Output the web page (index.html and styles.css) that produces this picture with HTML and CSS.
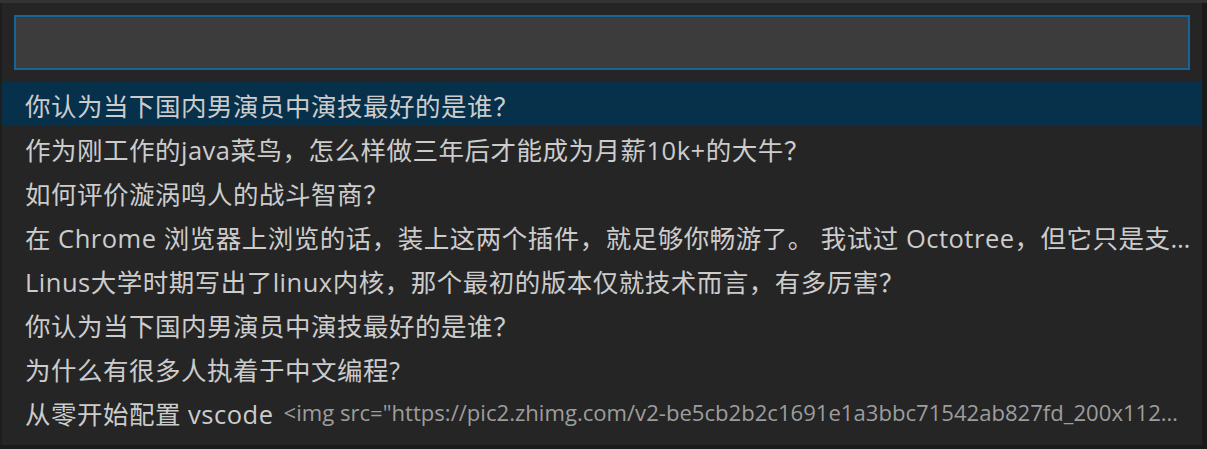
FILE: index.html
```html
<!DOCTYPE html>
<html lang="zh">
<head>
<meta charset="utf-8">
<link rel="stylesheet" href="styles.css">
</head>
<body>
<div class="topstrip"></div>
<div class="frame">
  <div class="widget">
    <div class="input-wrap"><input class="input" type="text" aria-label="input"></div>
    <ul class="list">
      <li class="row selected"><span class="label">你认为当下国内男演员中演技最好的是谁？</span></li>
      <li class="row"><span class="label">作为刚工作的java菜鸟，怎么样做三年后才能成为月薪10k+的大牛？</span></li>
      <li class="row"><span class="label">如何评价漩涡鸣人的战斗智商？</span></li>
      <li class="row"><span class="label">在 Chrome 浏览器上浏览的话，装上这两个插件，就足够你畅游了。 我试过 Octotree，但它只是支持 GitHub 的代码浏览，而 Sourcegraph 可以支持更多</span></li>
      <li class="row"><span class="label">Linus大学时期写出了linux内核，那个最初的版本仅就技术而言，有多厉害？</span></li>
      <li class="row"><span class="label">你认为当下国内男演员中演技最好的是谁？</span></li>
      <li class="row"><span class="label">为什么有很多人执着于中文编程?</span></li>
      <li class="row"><span class="label">从零开始配置 vscode</span><span class="desc">&lt;img src="https://pic2.zhimg.com/v2-be5cb2b2c1691e1a3bbc71542ab827fd_200x112.jpg" data-rawwidth="1280"&gt;</span></li>
    </ul>
  </div>
  <div class="side"></div>
</div>
</body>
</html>
```
FILE: styles.css
```css
html, body {
  margin: 0;
  padding: 0;
  background: #1a1a1a;
  width: 1207px;
  height: 449px;
  overflow: hidden;
}
.topstrip {
  height: 3px;
  background: #333333;
}
.frame {
  display: flex;
  padding-left: 2px;
  background: #1e1e1e;
}
.widget {
  width: 1200px;
  height: 442px;
  background: #252526;
  padding-top: 12px;
  box-sizing: border-box;
  font-family: "Open Sans", "Noto Sans CJK SC", sans-serif;
  color: #cccccc;
}
.side {
  flex: 1;
  background: #1a1a1a;
}
.input-wrap {
  padding: 0 12px;
}
.input {
  display: block;
  width: 100%;
  height: 55px;
  box-sizing: border-box;
  background: #3c3c3c;
  border: 2px solid #17649b;
  outline: none;
  margin: 0;
}
.list {
  list-style: none;
  margin: 12px 0 0;
  padding: 0;
}
.row {
  height: 44px;
  display: flex;
  align-items: center;
  padding: 0 4px 0 23px;
  white-space: nowrap;
  overflow: hidden;
  font-size: 25.5px;
  letter-spacing: 0.5px;
}
.row.selected {
  background: #07304a;
}
.label {
  overflow: hidden;
  text-overflow: ellipsis;
  flex: 0 1 auto;
  min-width: 0;
}
.row .label:not(:only-child) {
  flex-shrink: 0;
}
.desc {
  flex: 0 1 auto;
  min-width: 0;
  overflow: hidden;
  text-overflow: ellipsis;
  margin-left: 10px;
  margin-right: 18px;
  font-size: 22.1px;
  letter-spacing: 0;
  color: #9d9d9d;
}
```
